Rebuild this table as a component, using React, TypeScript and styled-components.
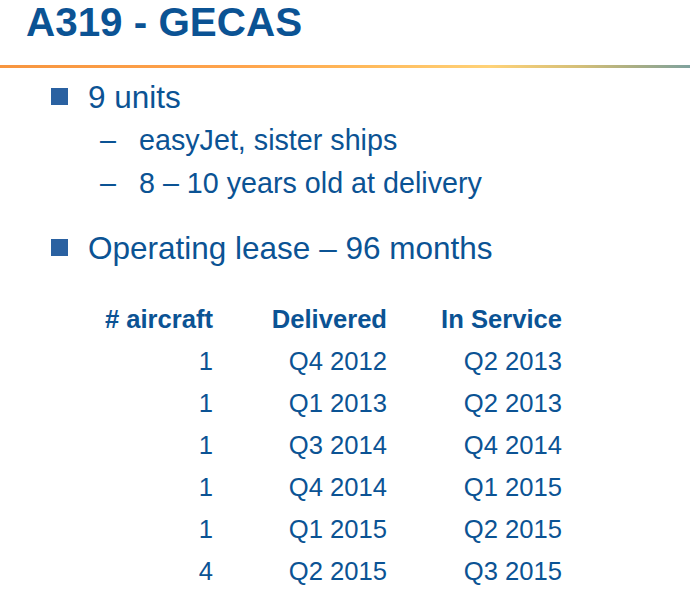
import React from "react";
import styled, { createGlobalStyle } from "styled-components";

const Global = createGlobalStyle`
  html, body { margin: 0; padding: 0; background: #ffffff; }
  body { font-family: "Liberation Sans", Arial, Helvetica, sans-serif; color: #0B5394; }
`;

const Slide = styled.div`
  width: 690px;
  height: 601px;
  overflow: hidden;
  display: flex;
  flex-direction: column;
`;

const Title = styled.h1`
  margin: 0;
  padding: 1.5px 0 0 26px;
  font-size: 40.4px;
  line-height: 40px;
  font-weight: 700;
  color: #0B5394;
`;

const Divider = styled.div`
  margin-top: 23.5px;
  height: 3px;
  background: linear-gradient(
    90deg,
    #f7953f 0%,
    #ffa44c 35%,
    #ffb859 52%,
    #ffd277 71%,
    #d4bf78 84%,
    #a9ae84 92%,
    #7fa29e 100%
  );
`;

const MainItem = styled.div<{ $gap: number }>`
  display: flex;
  align-items: flex-start;
  margin-top: ${(p) => p.$gap}px;
  padding-left: 51px;
  font-size: 31.5px;
  line-height: 40px;
`;

const Square = styled.span`
  width: 17px;
  height: 17px;
  margin-top: 11px;
  margin-right: 20px;
  background: #2a61a1;
  flex: none;
`;

const SubItem = styled.div<{ $gap: number }>`
  display: flex;
  margin-top: ${(p) => p.$gap}px;
  padding-left: 100px;
  font-size: 28.7px;
  line-height: 43px;
`;

const Dash = styled.span`
  width: 39px;
  flex: none;
`;

const Table = styled.div`
  margin-top: 29.3px;
  margin-left: 100px;
  display: grid;
  grid-template-columns: 113px 174px 175px;
  font-size: 25.6px;
  line-height: 42px;
`;

const Cell = styled.div<{ $head?: boolean }>`
  text-align: right;
  font-weight: ${(p) => (p.$head ? 700 : 400)};
  white-space: nowrap;
`;

const rows: [string, string, string][] = [
  ["1", "Q4 2012", "Q2 2013"],
  ["1", "Q1 2013", "Q2 2013"],
  ["1", "Q3 2014", "Q4 2014"],
  ["1", "Q4 2014", "Q1 2015"],
  ["1", "Q1 2015", "Q2 2015"],
  ["4", "Q2 2015", "Q3 2015"],
];

export default function App() {
  return (
    <>
      <Global />
      <Slide>
        <Title>A319 - GECAS</Title>
        <Divider />
        <MainItem $gap={9}>
          <Square />
          <span>9 units</span>
        </MainItem>
        <SubItem $gap={2.3}>
          <Dash>–</Dash>
          <span>easyJet, sister ships</span>
        </SubItem>
        <SubItem $gap={0}>
          <Dash>–</Dash>
          <span>8 – 10 years old at delivery</span>
        </SubItem>
        <MainItem $gap={23}>
          <Square />
          <span>Operating lease – 96 months</span>
        </MainItem>
        <Table>
          <Cell $head># aircraft</Cell>
          <Cell $head>Delivered</Cell>
          <Cell $head>In Service</Cell>
          {rows.map((r, i) => (
            <React.Fragment key={i}>
              <Cell>{r[0]}</Cell>
              <Cell>{r[1]}</Cell>
              <Cell>{r[2]}</Cell>
            </React.Fragment>
          ))}
        </Table>
      </Slide>
    </>
  );
}
